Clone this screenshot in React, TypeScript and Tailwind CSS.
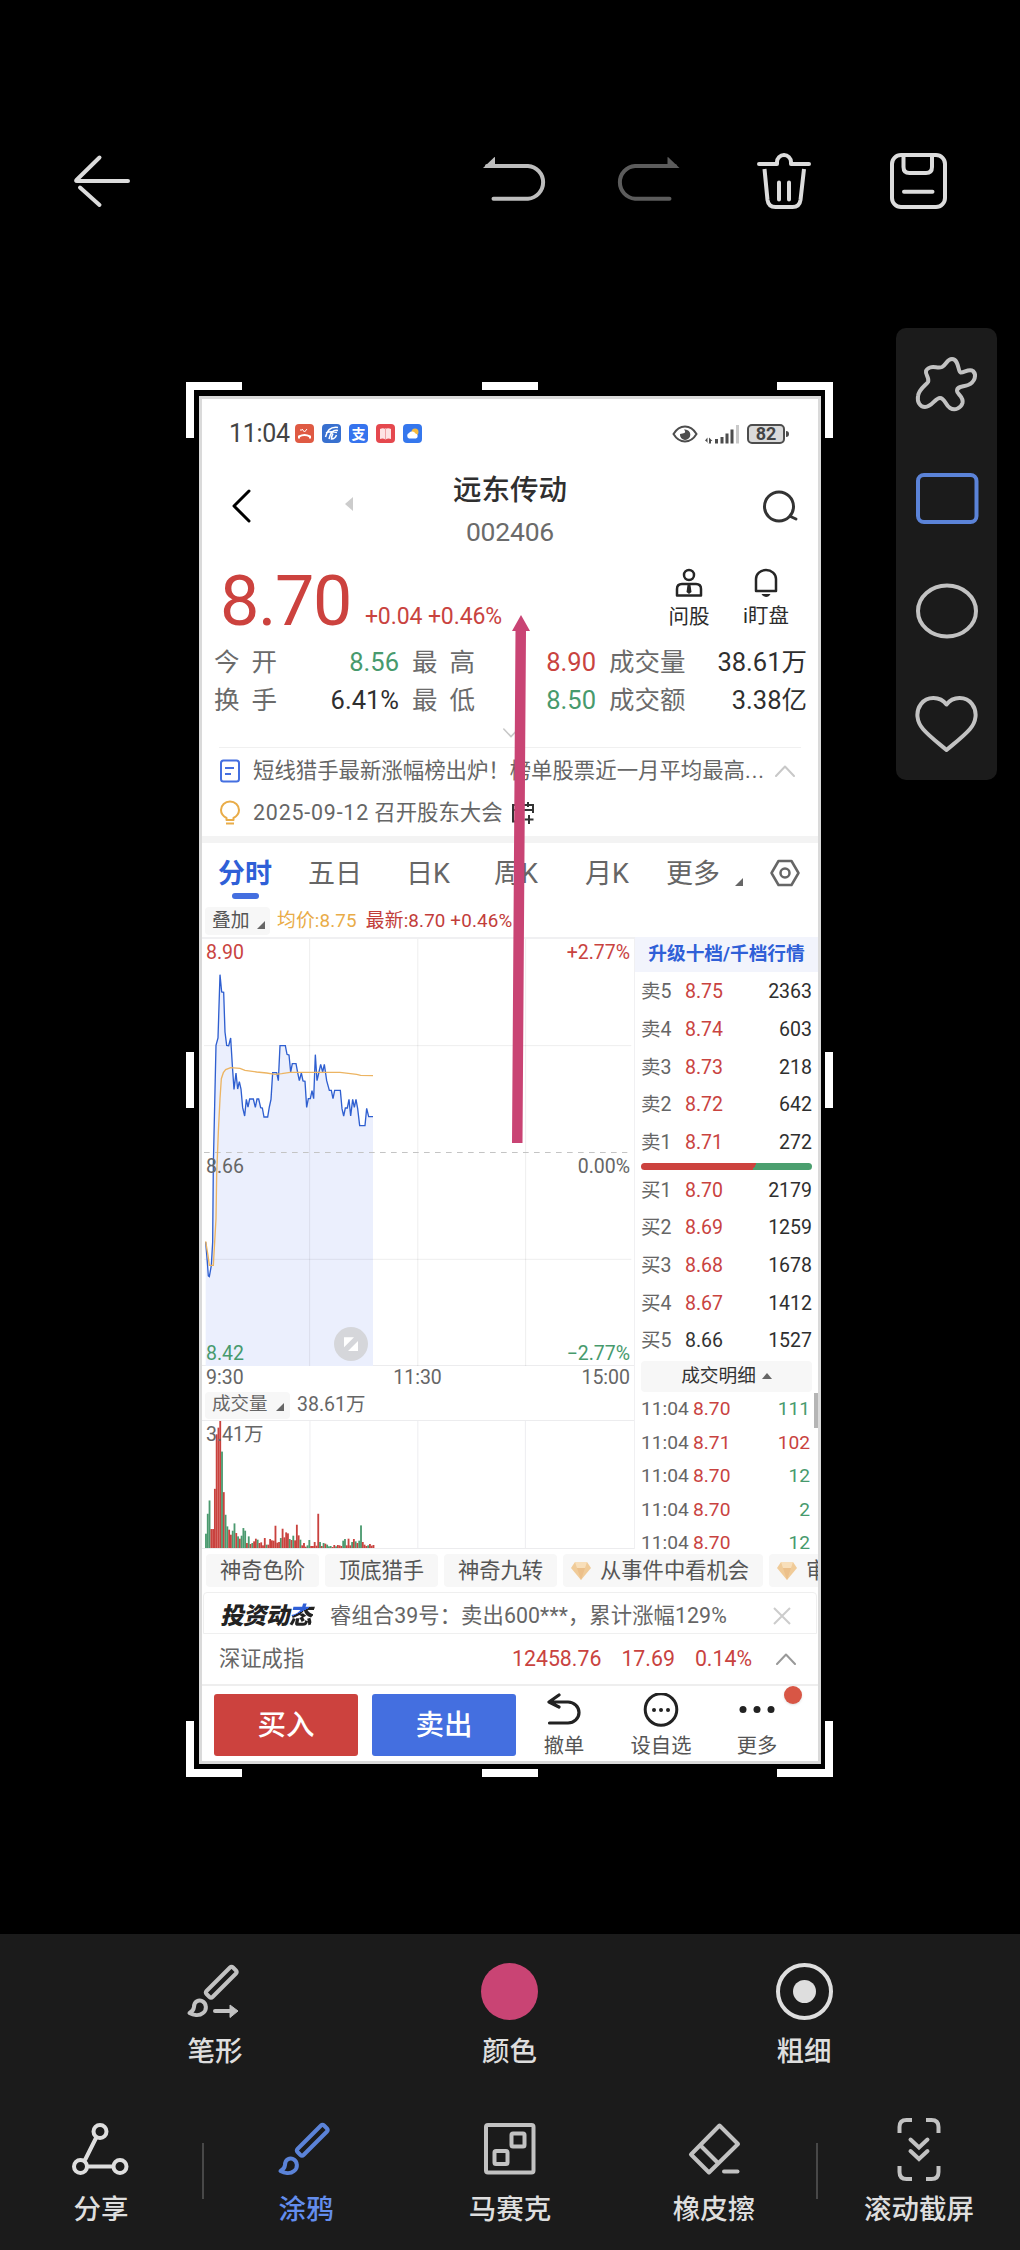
import React from "react";
import clsx from "clsx";

const PRICE_LINE =
    "47,930 52,990 55,1032 58,1034 64,1000 68,930 70,700 74,520 78,340 84,318 90,128 95,180 101,181 105,300 110,340 116,341 122,318 127,400 132,472 138,423 143,471 148,449 153,471 158,527 164,552 169,502 174,525 179,501 190,501 196,526 201,501 206,501 212,527 217,528 222,555 233,555 238,525 243,502 248,422 260,422 265,446 270,341 286,341 291,367 297,369 302,420 307,395 318,395 323,422 328,446 334,423 339,447 345,448 350,526 355,500 361,500 366,476 371,500 376,368 381,446 387,420 392,397 398,420 403,397 410,446 418,475 424,475 429,500 434,475 451,475 456,530 461,552 466,528 472,528 477,502 482,552 488,502 493,526 498,502 503,530 509,581 525,581 530,529 536,554 549,554";

const AVG_LINE =
    "47,928 54,970 58,1000 70,1000 78,860 80,730 85,600 90,500 94,440 100,422 107,413 122,407 150,409 165,415 200,420 230,423 255,427 275,425 300,421 450,421 500,427 512,430 549,431";

// one entry per minute since 9:30, positive = up, negative = down
const VOLUMES = [
    -43, -103, -143, 57, 57, 178, 342, 362, 382, -290, 168, -100, -65, 55, 40, -52, -74, 45, -35, 28, -37, -60, -52,
    15, -35, 12, -15, 20, 28, -25, 15, 17, 8, 30, -10, 10, 27, 23, 22, 67, 16, 18, -30, 58, 32, 47, 44, -27, 24, -37,
    23, 70, 38, -25, 8, 15, 4, -8, -24, 6, 6, 18, 7, 103, -18, 6, -15, 13, -10, -5, -6, 3, 9, -5, 9, 8, 6, -22, -27, 8,
    28, 8, -18, 27, -20, 15, -22, -68, 18, 10, 6, -8, 12, 7, 9,
];

const SELLS = [
    ["卖5", "8.75", "2363"],
    ["卖4", "8.74", "603"],
    ["卖3", "8.73", "218"],
    ["卖2", "8.72", "642"],
    ["卖1", "8.71", "272"],
];

const BUYS = [
    ["买1", "8.70", "2179"],
    ["买2", "8.69", "1259"],
    ["买3", "8.68", "1678"],
    ["买4", "8.67", "1412"],
    ["买5", "8.66", "1527"],
];

const TRADES = [
    { price: "8.70", vol: "111", up: false },
    { price: "8.71", vol: "102", up: true },
    { price: "8.70", vol: "12", up: false },
    { price: "8.70", vol: "2", up: false },
    { price: "8.70", vol: "12", up: false },
];

const Corner = ({ className = "" }: { className?: string }) => (
    <svg viewBox="0 0 8 8" className={clsx("w-2 h-2", className)} fill="#666">
        <path d="M8 0v8H0z" />
    </svg>
);

const Chevron = ({ className = "", up = false }: { className?: string; up?: boolean }) => (
    <svg
        viewBox="0 0 20 12"
        className={className}
        fill="none"
        stroke="currentColor"
        strokeWidth="2"
        strokeLinecap="round"
        strokeLinejoin="round"
    >
        <path d={up ? "M1 11L10 1.500L19 11" : "M1 1L10 10.500L19 1"} />
    </svg>
);

const Diamond = () => (
    <svg viewBox="0 0 20 18" className="w-5 h-[18px] shrink-0">
        <path d="M4 0h12l4 6-10 12L0 6z" fill="#f0cb98" />
        <path d="M4 0h12l-2 6H6z" fill="#f8dfba" />
        <path d="M6 6h8l-4 12z" fill="#ecc08a" />
    </svg>
);

/* ---------- editor chrome ---------- */

const TopBar = () => (
    <div className="absolute inset-x-0 top-[150px] flex h-16 items-center pl-[72px] pr-[70px] text-[#dcdcdc]">
        <svg viewBox="0 0 60 64" className="w-[60px] h-16" fill="none" stroke="currentColor" strokeWidth="4" strokeLinecap="round">
            <path d="M27.500 7.500L4.500 30Q3.500 31 5 31H56M8 37.500L27.500 55" />
        </svg>
        <svg viewBox="0 0 64 64" className="ml-[350px] w-16 h-16" fill="none" stroke="#bdbdbd" strokeWidth="4" strokeLinecap="round">
            <path d="M5 16H46A16.400 16.400 0 0 1 46 48.700H11.500" />
            <path d="M1 18L12.500 7Q13 6.700 13 8V18z" fill="#bdbdbd" stroke="none" />
        </svg>
        <svg viewBox="0 0 64 64" className="ml-[70px] w-16 h-16" fill="none" stroke="#5c5c5c" strokeWidth="4" strokeLinecap="round">
            <path d="M59 16H19A16.400 16.400 0 0 0 19 48.700H53.500" />
            <path d="M63.500 18L52 7Q51.500 6.700 51.500 8V18z" fill="#5c5c5c" stroke="none" />
        </svg>
        <svg viewBox="0 0 56 64" className="ml-[76px] w-14 h-16" fill="none" stroke="currentColor" strokeWidth="4" strokeLinecap="round">
            <path d="M3 14H21V12A7 7 0 0 1 35 12V14H53" strokeLinejoin="round" />
            <path d="M8.500 19L11.500 50Q12.500 57 19.500 57H36.500Q43.500 57 44.500 50L48 19" strokeLinecap="butt" />
            <path d="M23 32.500V49.500M33 32.500V49.500" />
        </svg>
        <svg viewBox="0 0 60 64" className="ml-[77px] w-[60px] h-16" fill="none" stroke="currentColor" strokeWidth="4" strokeLinecap="round">
            <rect x="3" y="5" width="53" height="52" rx="9" />
            <path d="M14.500 5V17Q14.500 23 20.500 23H37Q43 23 43 17V5M15 41.700H43.500" />
        </svg>
    </div>
);

const ShapePalette = () => (
    <div className="absolute left-[896px] top-[328px] flex h-[452px] w-[101px] flex-col items-center justify-between rounded-[10px] bg-[#1b1b1b] pb-[26px] pt-[27px] text-[#c2c2c2]">
        <svg viewBox="0 0 64 60" className="w-16 h-[60px]" fill="none" stroke="currentColor" strokeWidth="4" strokeLinejoin="round">
            <path d="M15 12.500C19 11 23 13.500 27 12C31 10 32 4 37 4C44 4 43 17 45.500 17.500C49 18 54 13 58 16C62 20 60 27 53 30C48 32 42 31 42 36C42 39 49 42 47.500 48C46 53 40 56 35 53C30 50 30 43 25 43C20 43 17 52 10 52C5 52 2 47 3 41C4 34 11 30 13 27C15 23 10 20 11 16Q11.500 14 15 12.500Z" />
        </svg>
        <svg viewBox="0 0 64 60" className="w-16 h-[60px]" fill="none" stroke="#5b83d8" strokeWidth="4">
            <rect x="3" y="7" width="58.500" height="47" rx="6" />
        </svg>
        <svg viewBox="0 0 64 60" className="w-16 h-[60px]" fill="none" stroke="currentColor" strokeWidth="4">
            <ellipse cx="32" cy="30" rx="29" ry="25.500" />
        </svg>
        <svg viewBox="0 0 64 60" className="w-16 h-[60px]" fill="none" stroke="currentColor" strokeWidth="4" strokeLinejoin="round">
            <path d="M31.500 10.500C25 2 12 2 6 10C0 18 2 28 8 35C14 42 22 48 31.500 56C41 48 49 42 55 35C61 28 63 18 57 10C51 2 38 2 31.500 10.500Z" />
        </svg>
    </div>
);

const CropHandles = () => (
    <div className="pointer-events-none absolute left-[186px] top-[382px] h-[1395px] w-[647px]">
        <div className="absolute left-0 top-0 h-14 w-14 border-l-[8px] border-t-[8px] border-white" />
        <div className="absolute right-0 top-0 h-14 w-14 border-r-[8px] border-t-[8px] border-white" />
        <div className="absolute bottom-0 left-0 h-14 w-14 border-b-[8px] border-l-[8px] border-white" />
        <div className="absolute bottom-0 right-0 h-14 w-14 border-b-[8px] border-r-[8px] border-white" />
        <div className="absolute left-[296px] top-0 h-2 w-14 bg-white" />
        <div className="absolute bottom-0 left-[296px] h-2 w-14 bg-white" />
        <div className="absolute left-0 top-[670px] h-14 w-2 bg-white" />
        <div className="absolute right-0 top-[670px] h-14 w-2 bg-white" />
    </div>
);

const Brush = ({ arrow = false }: { arrow?: boolean }) => (
    <svg viewBox="0 0 60 60" className="w-[60px] h-[60px]" fill="none" stroke="currentColor" strokeWidth="4" strokeLinejoin="round">
        <path d="M21.500 30L45 6.500Q46.500 5 48 6.500L51 9.500Q52.500 11 51 12.500L27.500 36Q26 37.500 24.500 36L21.500 33Q20 31.500 21.500 30Z" />
        <path d="M4.500 52Q8.500 50 9 46C9 40 14 38.500 17 40C22 42.500 22 49 18 52C14 55.500 8 54 4.500 52Z" />
        {arrow && <path d="M30 50H45" strokeLinecap="round" />}
        {arrow && <path d="M45 44L53 50L45 56.500Z" fill="currentColor" strokeWidth="1" />}
    </svg>
);

const Tool = ({ label, className = "", children }: { label: string; className?: string; children: React.ReactNode }) => (
    <div className={clsx("flex flex-col items-center", className)}>
        <div className="flex h-[66px] items-center">{children}</div>
        <span className="mt-[5px] h-10 whitespace-nowrap text-[27.500px] font-medium leading-10">{label}</span>
    </div>
);

const BottomBar = () => (
    <div className="absolute inset-x-0 top-[1934px] h-[316px] bg-[#1b1b1b] font-['Noto_Sans_CJK_SC',sans-serif] text-[#dedede]">
        <div className="flex pl-[115px] pr-[116px] pt-6">
            <Tool label="笔形" className="w-[200px]">
                <div className="text-[#c2c2c2]">
                    <Brush arrow />
                </div>
            </Tool>
            <Tool label="颜色" className="mx-[94.500px] w-[200px]">
                <div className="h-[57px] w-[57px] rounded-full bg-[#c94474]" />
            </Tool>
            <Tool label="粗细" className="w-[200px]">
                <div className="flex h-[57px] w-[57px] items-center justify-center rounded-full border-4 border-current">
                    <div className="h-[23px] w-[23px] rounded-full bg-current" />
                </div>
            </Tool>
        </div>
        <div className="mt-[47px] flex">
            <Tool label="分享" className="w-[202px]">
                <svg viewBox="0 0 60 60" className="w-[60px] h-[60px]" fill="none" stroke="currentColor" strokeWidth="4">
                    <path d="M25.500 18L14 41M17 47.500H42" />
                    <circle cx="29" cy="12.500" r="6.500" />
                    <circle cx="9.500" cy="47.500" r="6.500" />
                    <circle cx="49" cy="47.500" r="6.500" />
                </svg>
            </Tool>
            <div className="mt-[27px] h-14 w-[2px] bg-[#484848]" />
            <Tool label="涂鸦" className="w-[204px] text-[#638ded]">
                <div className="text-[#5b83d8]">
                    <Brush />
                </div>
            </Tool>
            <Tool label="马赛克" className="w-[204px]">
                <svg viewBox="0 0 60 60" className="w-[60px] h-[60px]" fill="none" stroke="#c2c2c2" strokeWidth="4">
                    <rect x="6" y="6" width="47.500" height="47.500" rx="2" />
                    <rect x="31.500" y="14.500" width="13" height="13" rx="1.500" />
                    <rect x="14.500" y="32" width="13" height="13" rx="1.500" />
                </svg>
            </Tool>
            <Tool label="橡皮擦" className="w-[204px]">
                <svg viewBox="0 0 60 60" className="w-[60px] h-[60px]" fill="none" stroke="#c2c2c2" strokeWidth="4" strokeLinejoin="round">
                    <path d="M35.500 6.500L54 25L25 53.500L7 35.500Z" />
                    <path d="M16 26L34.500 44.500" />
                    <path d="M40 52.500H53.500" strokeLinecap="round" />
                </svg>
            </Tool>
            <div className="mt-[27px] h-14 w-[2px] bg-[#484848]" />
            <Tool label="滚动截屏" className="w-[202px]">
                <svg viewBox="0 0 60 66" className="w-[60px] h-[66px]" fill="none" stroke="#c2c2c2" strokeWidth="4">
                    <path d="M10.500 17V11Q10.500 4 17.500 4H23M37 4H42.500Q49.500 4 49.500 11V17M10.500 50V56Q10.500 63 17.500 63H23M37 63H42.500Q49.500 63 49.500 56V50" />
                    <path d="M21.500 23.500L30 31.500L38.500 23.500M21.500 35L30 43L38.500 35" strokeLinecap="round" />
                </svg>
            </Tool>
        </div>
    </div>
);

/* ---------- stock page ---------- */

const AppIcon = ({ className, children }: { className: string; children: React.ReactNode }) => (
    <div className={clsx("mr-2 flex h-[19px] w-[19px] items-center justify-center rounded-[4px] text-white", className)}>{children}</div>
);

const StatusBar = () => (
    <div className="flex h-[69px] items-center pl-[27px] pr-[29px]">
        <span className="mr-[5px] w-[61px] whitespace-nowrap text-[25px] tracking-[-0.300px] text-[#444]">11:04</span>
        <AppIcon className="bg-[#df5a43]">
            <svg viewBox="0 0 19 19" className="w-[19px]" fill="none" stroke="currentColor" strokeWidth="2">
                <path d="M4 14.500V12.500Q9.500 9.500 15 12.500V14.500" />
                <path d="M7 5L9.500 8L12 5M6 5V7" strokeWidth="1" />
            </svg>
        </AppIcon>
        <AppIcon className="bg-[#3870cf]">
            <svg viewBox="0 0 19 19" className="w-[19px]" fill="none" stroke="currentColor" strokeWidth="1.500">
                <path d="M16 3.500Q6 2 3.500 13M16 6.500Q9 5 7 15M4 9Q8 7 15 8.500M11 9.500Q9.500 12 9.500 15Q13 15 14.500 11" />
            </svg>
        </AppIcon>
        <AppIcon className="bg-[#3674ee]">
            <span className="text-[14px] font-bold leading-none">支</span>
        </AppIcon>
        <AppIcon className="bg-[#e5484e]">
            <svg viewBox="0 0 19 19" className="w-[19px]">
                <path d="M4 5Q7 3.500 9.300 5Q12 3.500 15 5V15Q12 14 9.500 15.500Q7 14 4 15Z" fill="#fde3e4" />
                <path d="M9.500 4V15" stroke="#f1a0a4" />
            </svg>
        </AppIcon>
        <AppIcon className="bg-[#3577ed]">
            <svg viewBox="0 0 19 19" className="w-[19px]">
                <circle cx="12" cy="8" r="3.500" fill="#f6bb3e" />
                <path d="M6 14.500A3 3 0 0 1 6 9A4 4 0 0 1 12.500 9.500A2.600 2.600 0 0 1 13 14.500Z" fill="#fff" />
            </svg>
        </AppIcon>
        <svg viewBox="0 0 26 18" className="ml-auto w-[26px] h-[18px]" fill="none" stroke="#4d4d4d" strokeWidth="2">
            <path d="M1.500 9Q6 1.500 13 1.500T24.500 9Q20 16.500 13 16.500T1.500 9Z" />
            <path d="M12 4.500Q15 8 10.500 8.500L8 9A5.200 5.200 0 1 0 13 4.500Z" fill="#4d4d4d" stroke="none" />
        </svg>
        <svg viewBox="0 0 35 20" className="ml-[7px] w-[35px] h-5" fill="#4d4d4d">
            <path d="M0 16.500L2.500 13.500V19H4V13.500L7.500 17H6V19.500H4M10 15h3v4.500h-3zM15.500 13h3v6.500h-3zM20.500 9.500h3v10h-3zM25.500 5.500h3v14h-3z" />
            <path d="M31 1h3v18.500h-3z" fill="#c9c9c9" />
        </svg>
        <div className="ml-[7px] flex h-5 w-[38px] items-center justify-center rounded-[5px] border-2 border-[#4d4d4d] bg-[#dadada] text-[18px] font-bold leading-none text-[#444]">
            82
        </div>
        <div className="ml-[1px] h-[6px] w-[3px] rounded-r bg-[#4d4d4d]" />
    </div>
);

const Header = () => (
    <div className="flex h-[86px] items-start">
        <svg viewBox="0 0 20 36" className="ml-[29px] mt-5 w-5 h-9" fill="none" stroke="#000" strokeWidth="3" strokeLinecap="round" strokeLinejoin="round">
            <path d="M18 3L3 18L18 33" />
        </svg>
        <svg viewBox="0 0 8 14" className="ml-[94px] mt-[29px] w-2 h-[14px]" fill="#ccc">
            <path d="M8 0v14L0 7z" />
        </svg>
        <div className="ml-[52px] flex w-[210px] flex-col items-center text-center">
            <span className="mt-[2px] h-[41px] text-[28.500px] font-medium leading-[42px] text-[#2f2f2f]">远东传动</span>
            <span className="h-[42px] text-[26.500px] leading-[42px] tracking-[-0.200px] text-[#6b6b6b]">002406</span>
        </div>
        <svg viewBox="0 0 38 36" className="ml-auto mr-[18px] mt-5 w-[38px] h-9" fill="none" stroke="#333" strokeWidth="3" strokeLinecap="round">
            <circle cx="17" cy="18.500" r="14.500" />
            <path d="M28.500 28.500L34 31" />
        </svg>
    </div>
);

const PriceRow = () => (
    <div className="flex h-[89px] items-start">
        <span className="ml-[18px] mt-[9px] h-[76px] text-[70px] leading-[76px] tracking-[-1.400px] text-[#cc423e]">8.70</span>
        <span className="ml-[14px] mt-[47px] h-8 whitespace-nowrap text-[23px] leading-8 tracking-[-0.100px] text-[#c9433f]">+0.04 +0.46%</span>
        <div className="ml-auto flex w-[42px] flex-col items-center">
            <svg viewBox="0 0 28 30" className="mt-[14px] w-7 h-[30px]" fill="none" stroke="#262626" strokeWidth="2.500">
                <circle cx="14" cy="7" r="5" />
                <path d="M2 27.500V21Q2 16 7 16H21Q26 16 26 21V27.500Z" strokeLinejoin="round" />
                <path d="M12.500 17h3l1 7-2.500 2-2.500-2z" fill="#262626" stroke="none" />
            </svg>
            <span className="mt-1 h-[30px] text-[20.500px] leading-[30px] text-[#2b2b2b]">问股</span>
        </div>
        <div className="ml-[32px] mr-[28px] flex w-[48px] flex-col items-center">
            <svg viewBox="0 0 24 30" className="mt-[14px] w-6 h-[30px]" fill="none" stroke="#262626" strokeWidth="2.500">
                <path d="M2 23V11A10 9 0 0 1 22 11V23Z" strokeLinejoin="round" />
                <path d="M7.500 26H16.500Q15 29 12 29T7.500 26Z" fill="#262626" stroke="none" />
            </svg>
            <span className="mt-[3px] h-[30px] whitespace-nowrap text-[20.500px] leading-[30px] text-[#2b2b2b]">i盯盘</span>
        </div>
    </div>
);

const Stats = () => (
    <div className="grid grid-cols-[63px_122px_13px_63px_121px_13px_77px_121px] pl-3 text-[25.500px] leading-[38px] text-[#6b6b6b]">
        <span className="flex justify-between"><i className="not-italic">今</i><i className="not-italic">开</i></span>
        <span className="text-right text-[#479a6d]">8.56</span>
        <span />
        <span className="flex justify-between"><i className="not-italic">最</i><i className="not-italic">高</i></span>
        <span className="text-right text-[#c9433f]">8.90</span>
        <span />
        <span>成交量</span>
        <span className="text-right text-[#2f2f2f]">38.61万</span>
        <span className="flex justify-between"><i className="not-italic">换</i><i className="not-italic">手</i></span>
        <span className="text-right text-[#2f2f2f]">6.41%</span>
        <span />
        <span className="flex justify-between"><i className="not-italic">最</i><i className="not-italic">低</i></span>
        <span className="text-right text-[#479a6d]">8.50</span>
        <span />
        <span>成交额</span>
        <span className="text-right text-[#2f2f2f]">3.38亿</span>
    </div>
);

const Notices = () => (
    <div className="mx-[17px] border-t border-[#f0f0f0] text-[21.400px] text-[#666]">
        <div className="flex h-[46px] items-center">
            <svg viewBox="0 0 22 24" className="w-[22px] h-6 shrink-0" fill="none" stroke="#446fe0" strokeWidth="2">
                <rect x="2" y="1.500" width="18" height="21" rx="2.500" />
                <path d="M6 9H15M6 15H12" />
            </svg>
            <span className="ml-3 whitespace-nowrap">
                短线猎手最新涨幅榜出炉！榜单股票近一月平均最高<span className="tracking-[1px]">...</span>
            </span>
            <Chevron up className="ml-auto mr-[6px] w-5 h-3 text-[#c8c8c8]" />
        </div>
        <div className="flex h-[42px] items-center pb-1">
            <svg viewBox="0 0 22 26" className="w-[22px] h-[26px] shrink-0" fill="none" stroke="#e9ac48" strokeWidth="2">
                <path d="M7.500 20V18Q2 15 2 10A9 8.500 0 0 1 20 10Q20 15 14.500 18V20Z" strokeLinejoin="round" />
                <path d="M7 23.500H15" />
            </svg>
            <span className="ml-3 whitespace-nowrap"><span className="tracking-[0.800px]">2025-09-12</span> 召开股东大会</span>
            <svg viewBox="0 0 24 24" className="ml-2 w-6 h-6" fill="none" stroke="#333" strokeWidth="2">
                <path d="M11 20.500H2V4H22V12M2 9H22M7 1V6M17 1V6M18 14V23M13.500 18.500H22.500" />
            </svg>
        </div>
    </div>
);

const Tabs = () => (
    <div className="flex h-[62px] items-start whitespace-nowrap pt-[9px] text-[27px] leading-[44px] text-[#666]">
        <div className="ml-4 flex w-[54px] flex-col items-center font-bold text-[#2f5fd7]">
            <span>分时</span>
            <div className="-mt-[3px] h-[6px] w-[27px] rounded bg-[#446fe0]" />
        </div>
        <span className="ml-[36px] w-[98px]">五日</span>
        <span className="w-[88px]">日K</span>
        <span className="w-[91px]">周K</span>
        <span className="w-[81px]">月K</span>
        <span>更多</span>
        <Corner className="ml-[15px] mt-[26px]" />
        <svg viewBox="0 0 30 28" className="ml-auto mr-[18px] mt-[7px] w-[30px] h-7" fill="none" stroke="#666" strokeWidth="2.500" strokeLinejoin="round">
            <path d="M8.500 2H21.500L28.500 14L21.500 26H8.500L1.500 14Z" />
            <circle cx="15" cy="14" r="4.500" />
        </svg>
    </div>
);

const Legend = () => (
    <div className="flex h-[32px] items-center whitespace-nowrap pl-[3px] text-[18.800px]">
        <div className="flex h-7 w-[65px] items-center rounded bg-[#f7f7f7] pl-[7px] text-[#555]">
            叠加
            <Corner className="ml-[7px] mt-2" />
        </div>
        <span className="ml-[7px] tracking-[0.150px] text-[#e9ac48]">均价:8.75</span>
        <span className="ml-[9px] tracking-[0.150px] text-[#c23d3a]">最新:8.70 +0.46%</span>
    </div>
);

const PriceChart = () => (
    <div className="relative h-[428px] border-t-2 border-[#f0f0f2] text-[19.500px] leading-6 text-[#666]">
        <svg viewBox="39 21 1290 1281" className="ml-px block h-[427px] w-[430px]" fill="none">
            <polygon points={`47,1302 ${PRICE_LINE} 549,1302`} fill="#ebeffd" />
            <path d="M359 21V1302M683.500 21V1302M1007 21V1302M42 341H1324M42 982H1324" stroke="#000" strokeOpacity="0.070" strokeWidth="3" />
            <path d="M42 661.500H1312" stroke="#c4c4c4" strokeWidth="3" strokeDasharray="17 16" />
            <polyline points={PRICE_LINE} stroke="#2f5fd0" strokeWidth="4" />
            <polyline points={AVG_LINE} stroke="#ecb462" strokeWidth="4" />
            <circle cx="483" cy="1236" r="51" fill="#d5d6da" />
            <path d="M462 1216H492L462 1246ZM504 1227V1257H474Z" fill="#fff" />
        </svg>
        <span className="absolute left-1 top-[2px] text-[#c9433f]">8.90</span>
        <span className="absolute right-[4px] top-[2px] text-[#c9433f]">+2.77%</span>
        <span className="absolute left-1 top-[216px]">8.66</span>
        <span className="absolute right-[4px] top-[216px]">0.00%</span>
        <span className="absolute bottom-[-1px] left-1 text-[#479a6d]">8.42</span>
        <span className="absolute bottom-[-1px] right-[4px] text-[#479a6d]">−2.77%</span>
    </div>
);

const VolumeChart = () => (
    <div className="relative h-[129px] border-b border-t border-[#ececee] text-[19.500px] text-[#666]">
        <svg viewBox="39 813 1290 382" className="ml-px block h-[127px] w-[430px]">
            <path d="M359 813V1195M683.500 813V1195M1007 813V1195" stroke="#ededf0" strokeWidth="3" />
            {VOLUMES.map((v, i) => (
                <rect
                    key={i}
                    x={43.5 + i * 5.36}
                    y={1195 - Math.abs(v)}
                    width="5.500"
                    height={Math.abs(v)}
                    fill={v > 0 ? "#c9423e" : "#4b9a6f"}
                />
            ))}
        </svg>
        <span className="absolute left-1 top-[2px] leading-6">3.41万</span>
    </div>
);

const OrderRow = ({ row }: { row: string[] }) => (
    <div className="flex h-[37.700px] items-center text-[#666]">
        <span className="w-[44px]">{row[0]}</span>
        <span className={row[1] === "8.66" ? "text-[#333]" : "text-[#c9433f]"}>{row[1]}</span>
        <span className="ml-auto text-[#2f2f2f]">{row[2]}</span>
    </div>
);

const OrderBook = () => (
    <div className="relative h-[612px] w-[184px] overflow-hidden border-l border-[#f0f0f2] text-[19.500px]">
        <div className="flex h-[35px] items-center justify-center bg-[#f2f4fc] text-[18.700px] font-bold text-[#2f5fd7]">升级十档/千档行情</div>
        <div className="pl-[6px] pr-[6px] pt-px">
            {SELLS.map((r) => (
                <OrderRow key={r[0]} row={r} />
            ))}
            <div className="mb-[1px] mt-[2px] h-[7px] rounded-sm bg-[linear-gradient(120deg,#cc423e_66%,#4b9f6f_66%)]" />
            {BUYS.map((r) => (
                <OrderRow key={r[0]} row={r} />
            ))}
            <div className="mb-px mt-[1px] flex h-[31px] items-center justify-center rounded bg-[#f7f7f7] text-[18.700px] text-[#333]">
                成交明细
                <svg viewBox="0 0 10 6" className="ml-[6px] w-[10px] h-[6px]" fill="#666">
                    <path d="M5 0l5 6H0z" />
                </svg>
            </div>
            {TRADES.map((t, i) => (
                <div key={i} className="flex h-[33.500px] items-center text-[19.200px]">
                    <span className="w-[52px] text-[#666]">11:04</span>
                    <span className="text-[#c9433f]">{t.price}</span>
                    <span className={clsx("ml-auto mr-[2px]", t.up ? "text-[#c9433f]" : "text-[#479a6d]")}>{t.vol}</span>
                </div>
            ))}
        </div>
        <div className="absolute right-0 top-[456px] h-[35px] w-1 bg-[#b5b5b5]" />
    </div>
);

const Chips = () => (
    <div className="flex h-[43px] items-center gap-[6px] overflow-hidden whitespace-nowrap pl-1 text-[21.300px] text-[#555]">
        {["神奇色阶", "顶底猎手", "神奇九转"].map((c) => (
            <div key={c} className="flex h-[33px] w-[113px] shrink-0 items-center justify-center rounded bg-[#f7f7f7]">
                {c}
            </div>
        ))}
        <div className="flex h-[33px] w-[200px] shrink-0 items-center gap-[9px] rounded bg-[#f7f7f7] pl-2">
            <Diamond />
            从事件中看机会
        </div>
        <div className="flex h-[33px] w-[200px] shrink-0 items-center gap-[9px] rounded bg-[#f7f7f7] pl-2">
            <Diamond />
            审
        </div>
    </div>
);

const Footer = () => (
    <>
        <div className="mx-px flex h-[42px] items-center rounded-t border border-[#efefef] pl-4 pr-[25px] pt-[6px] text-[21.300px] text-[#666]">
            <div className="w-[110px] pl-[2px]">
                <span className="block -skew-x-12 whitespace-nowrap text-[23.500px] font-black leading-8 tracking-[-0.700px] text-[#222]">
                    投资动<span className="bg-[linear-gradient(150deg,#2f5fd7_38%,#222_38%)] bg-clip-text text-transparent">态</span>
                </span>
            </div>
            <span className="whitespace-nowrap tracking-[0.100px]">睿组合39号：卖出600***，累计涨幅129%</span>
            <svg viewBox="0 0 18 18" className="ml-auto w-[18px]" fill="none" stroke="#ccc" strokeWidth="2">
                <path d="M1 1L17 17M17 1L1 17" />
            </svg>
        </div>
        <div className="flex h-[50px] items-center pl-[17px] pr-[22px] text-[21.300px] text-[#666]">
            深证成指
            <span className="ml-auto text-[#c9433f]">12458.76</span>
            <span className="ml-5 text-[#c9433f]">17.69</span>
            <span className="ml-5 text-[#c9433f]">0.14%</span>
            <Chevron up className="ml-6 w-5 h-3 text-[#999]" />
        </div>
        <div className="relative flex flex-1 items-start border-t-2 border-[#eee] pl-3 pt-[8px] text-[20.300px] text-[#555]">
            <div className="flex h-[62px] w-36 items-center justify-center rounded-[3px] bg-[#cc423e] pt-[2px] text-[28.500px] font-medium text-white">买入</div>
            <div className="ml-[14px] flex h-[62px] w-36 items-center justify-center rounded-[3px] bg-[#446fe0] pt-[2px] text-[28.500px] font-medium text-white">卖出</div>
            <div className="ml-[17px] flex w-[62px] flex-col items-center leading-[30px]">
                <svg viewBox="0 0 36 36" className="-mt-px w-9 h-9" fill="none" stroke="#222" strokeWidth="3.200" strokeLinecap="round" strokeLinejoin="round">
                    <path d="M13 2L3 9L13 14M4 9H22A11 10.500 0 0 1 22 30H3.500" />
                </svg>
                <span className="mt-[2px]">撤单</span>
            </div>
            <div className="ml-[33px] flex w-[66px] flex-col items-center leading-[30px]">
                <svg viewBox="0 0 36 36" className="-mt-px w-9 h-9" fill="none" stroke="#222" strokeWidth="3">
                    <circle cx="18" cy="16.500" r="15.800" />
                    <path d="M11 17h.01M18 17h.01M25 17h.01" strokeWidth="4" strokeLinecap="round" />
                </svg>
                <span className="mt-[2px] whitespace-nowrap">设自选</span>
            </div>
            <div className="ml-[33px] flex w-[60px] flex-col items-center leading-[30px]">
                <svg viewBox="0 0 36 36" className="-mt-px w-9 h-9" fill="#222">
                    <circle cx="4" cy="16.500" r="3.500" />
                    <circle cx="18" cy="16.500" r="3.500" />
                    <circle cx="32" cy="16.500" r="3.500" />
                </svg>
                <span className="mt-[2px]">更多</span>
            </div>
            <div className="absolute right-4 top-0 h-[18px] w-[18px] rounded-full bg-[#d85645] shadow-sm" />
        </div>
    </>
);

const StockPage = () => (
    <div className="absolute left-[199px] top-[396px] flex h-[1368px] w-[622px] flex-col overflow-hidden border-[3px] border-[#dadada] bg-white font-['Roboto','Noto_Sans_CJK_SC',sans-serif]">
        <StatusBar />
        <Header />
        <PriceRow />
        <Stats />
        <div className="flex h-[28px] items-center pl-[301px]">
            <Chevron className="w-4 h-[10px] text-[#c8c8c8]" />
        </div>
        <Notices />
        <div className="h-[7px] bg-[#f3f3f3]" />
        <Tabs />
        <Legend />
        <div className="flex">
            <div className="w-[432px]">
                <PriceChart />
                <div className="flex h-[25px] items-center justify-between border-t border-[#ececee] pl-1 pr-[4px] text-[19.500px] text-[#666]">
                    <span>9:30</span>
                    <span className="ml-[10px]">11:30</span>
                    <span>15:00</span>
                </div>
                <div className="flex h-[30px] items-center pl-[3px] text-[18.500px] text-[#666]">
                    <div className="flex h-[27px] w-[85px] items-center rounded bg-[#f7f7f7] pl-[7px]">
                        成交量
                        <Corner className="ml-2 mt-1" />
                    </div>
                    <span className="ml-[7px] text-[19.500px]">38.61万</span>
                </div>
                <VolumeChart />
            </div>
            <OrderBook />
        </div>
        <Chips />
        <Footer />
    </div>
);

export default function App() {
    return (
        <div className="relative h-[2250px] w-[1020px] overflow-hidden bg-black">
            <TopBar />
            <StockPage />
            <CropHandles />
            {/* hand-drawn arrow on top of the capture */}
            <svg viewBox="0 0 20 530" className="absolute left-[511px] top-[614px] h-[530px] w-5" fill="#c94474">
                <path d="M10 1L19 17H15L11.500 529H1L4.500 17H1Z" />
            </svg>
            <ShapePalette />
            <BottomBar />
        </div>
    );
}
